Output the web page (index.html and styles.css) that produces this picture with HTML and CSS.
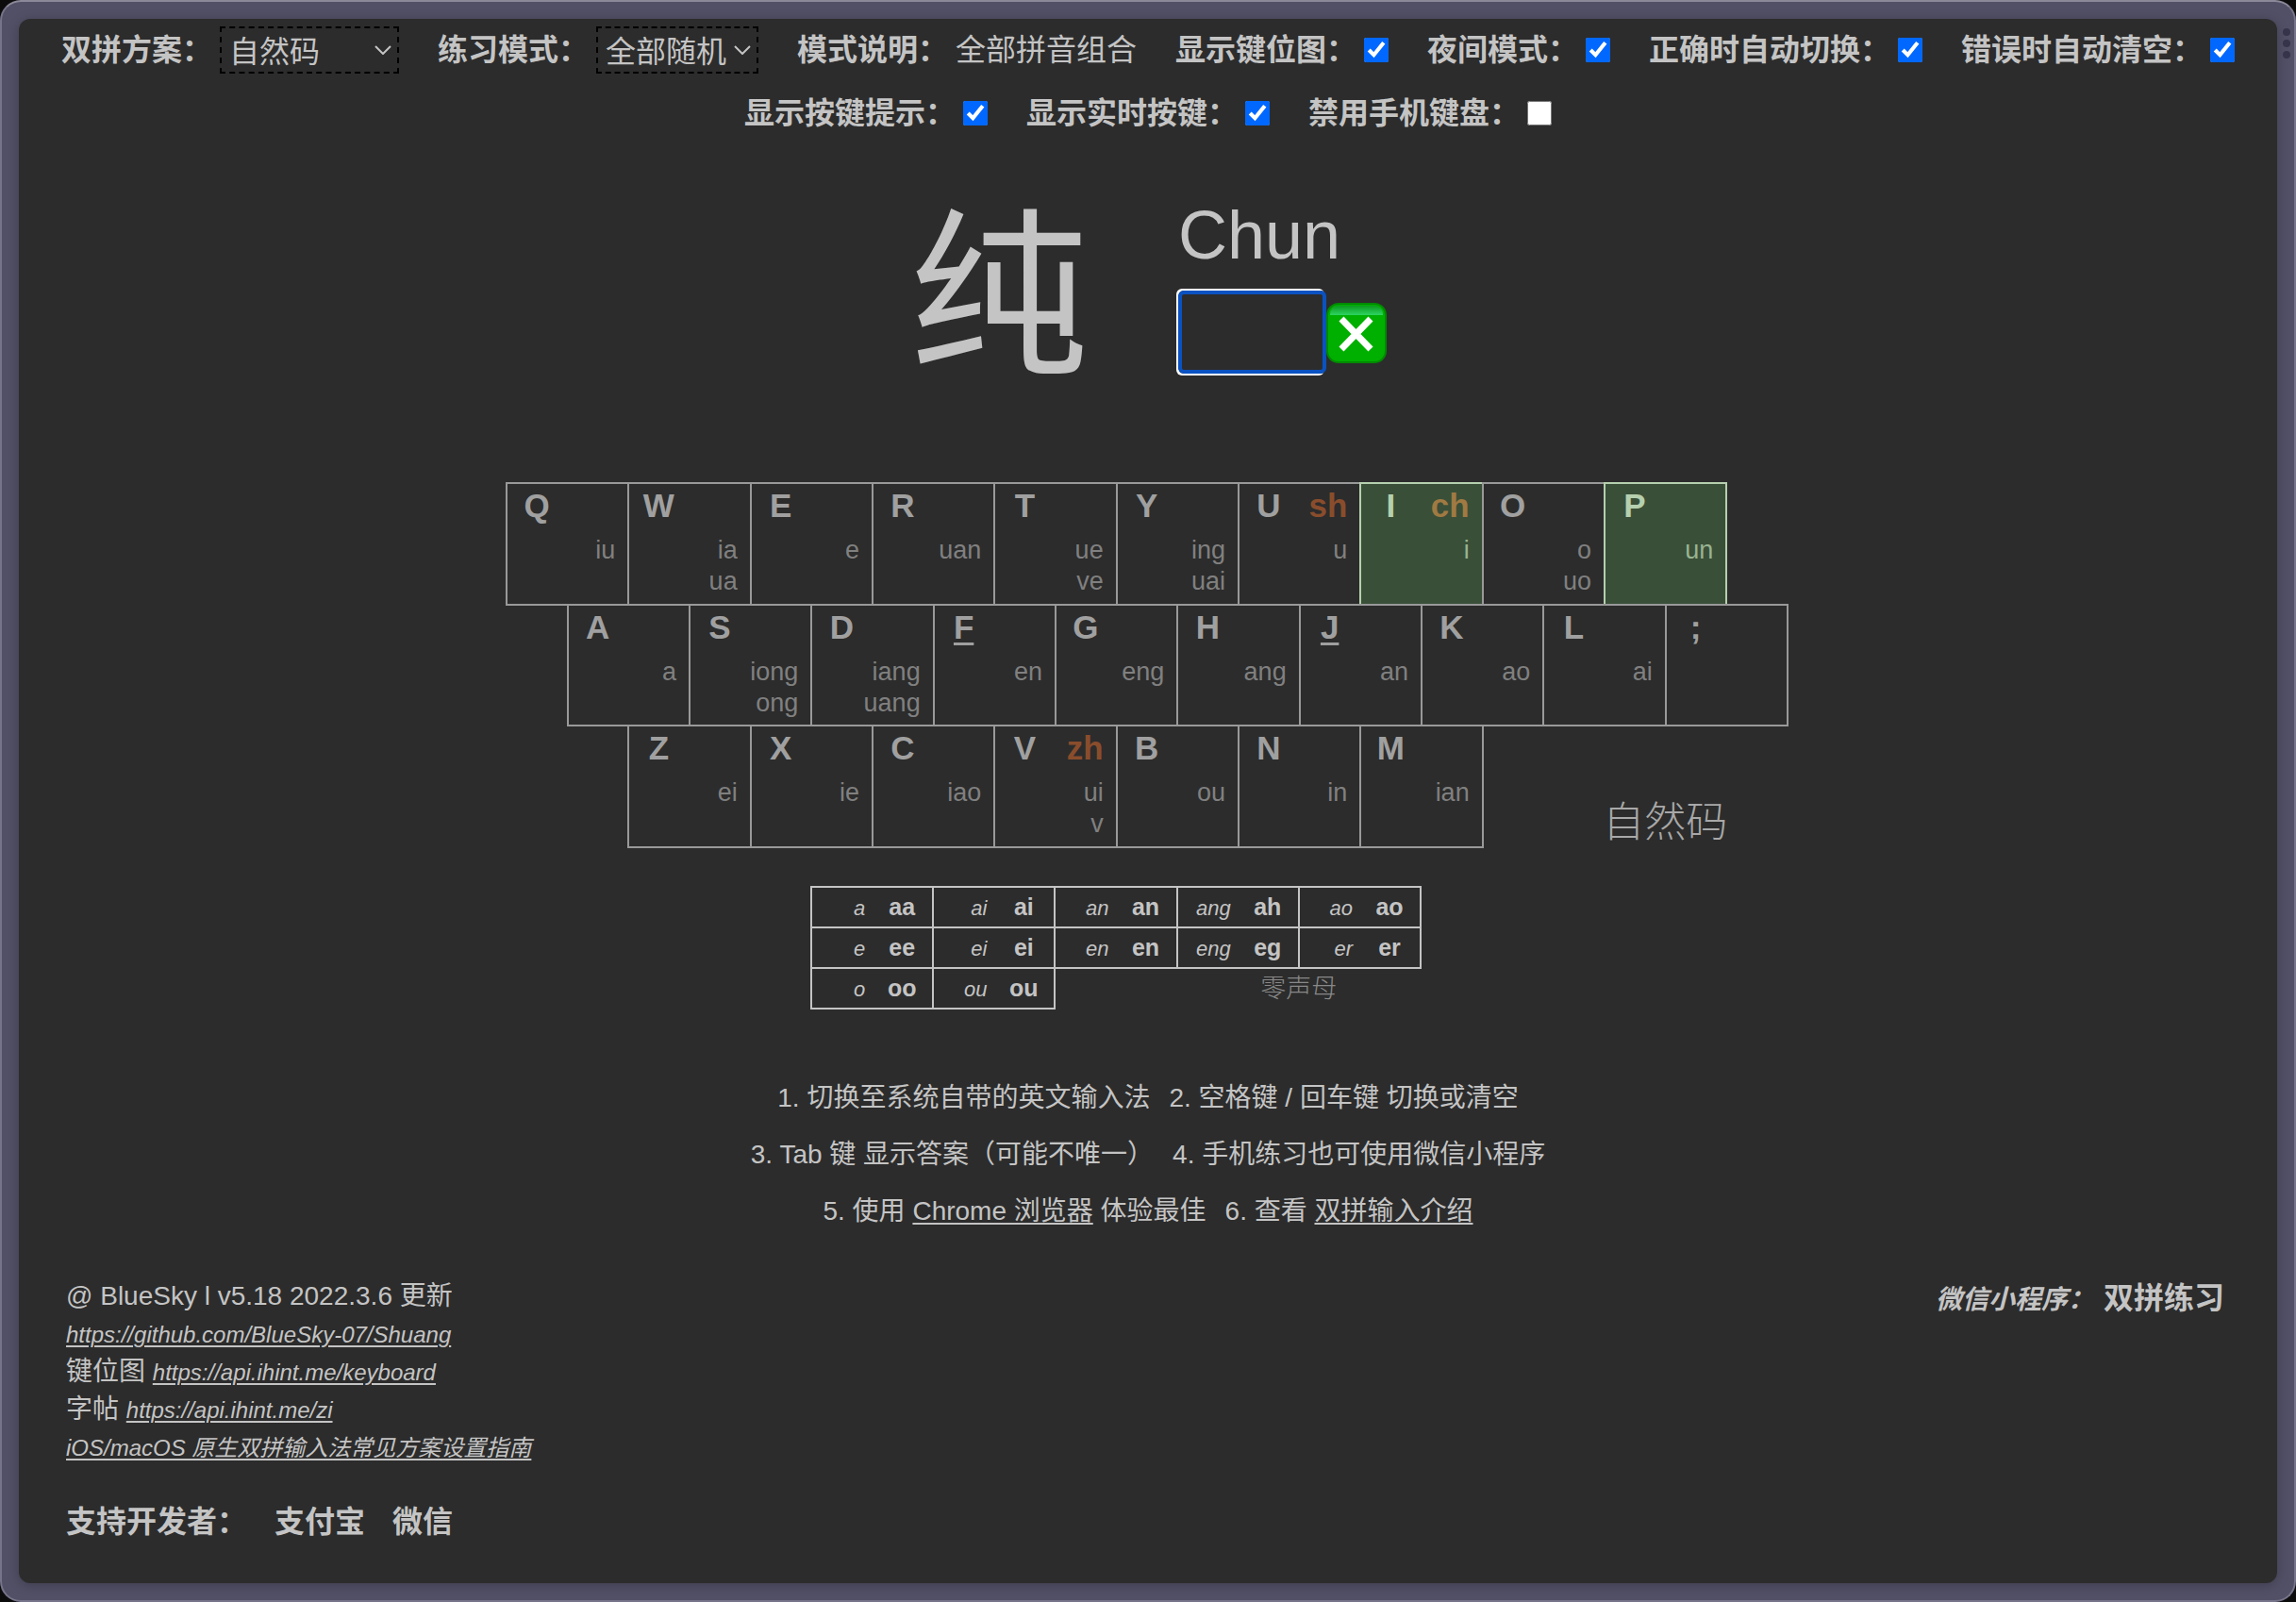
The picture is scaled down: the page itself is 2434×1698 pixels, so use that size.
FILE: index.html
```
<!DOCTYPE html>
<html lang="zh-CN">
<head>
    <meta charset="UTF-8">
    <title>双拼练习</title>
    <link rel="stylesheet" href="styles.css">
</head>
<body>
    <div class="frame">
        <div class="frame-dots"><i></i><i></i><i></i></div>
        <div class="page">
            <div class="settings">
                <div class="setting">
                    <label for="scheme">双拼方案：</label>
                    <div class="select-box scheme">
                        <select id="scheme"><option>自然码</option></select>
                        <svg width="18" height="10" viewBox="0 0 18 10"><path d="M1 1l8 8 8-8"/></svg>
                    </div>
                </div>
                <div class="setting">
                    <label for="mode">练习模式：</label>
                    <div class="select-box mode">
                        <select id="mode"><option>全部随机</option></select>
                        <svg width="18" height="10" viewBox="0 0 18 10"><path d="M1 1l8 8 8-8"/></svg>
                    </div>
                </div>
                <div class="setting"><b>模式说明：</b><span>全部拼音组合</span></div>
                <div class="setting"><label for="show-pic">显示键位图：</label><input type="checkbox" id="show-pic" checked></div>
                <div class="setting"><label for="dark">夜间模式：</label><input type="checkbox" id="dark" checked></div>
                <div class="setting"><label for="auto-next">正确时自动切换：</label><input type="checkbox" id="auto-next" checked></div>
                <div class="setting"><label for="auto-clear">错误时自动清空：</label><input type="checkbox" id="auto-clear" checked></div>
                <div class="setting"><label for="show-keys">显示按键提示：</label><input type="checkbox" id="show-keys" checked></div>
                <div class="setting"><label for="show-pressed">显示实时按键：</label><input type="checkbox" id="show-pressed" checked></div>
                <div class="setting"><label for="no-mobile">禁用手机键盘：</label><input type="checkbox" id="no-mobile"></div>
            </div>

            <div class="question">
                <div class="hanzi">纯</div>
                <div class="answer">
                    <label class="pinyin" for="answer">Chun</label>
                    <div class="answer-row">
                        <input type="text" id="answer" maxlength="2" autocomplete="off">
                        <button class="clear" aria-label="清空">
                            <svg width="64" height="64" viewBox="0 0 64 64">
                                <defs>
                                    <linearGradient id="shine" x1="0" y1="0" x2="0" y2="1">
                                        <stop offset="0" stop-color="#0a9a1e"/>
                                        <stop offset="1" stop-color="#2ed462"/>
                                    </linearGradient>
                                </defs>
                                <rect x="0" y="0" width="64" height="64" rx="13" fill="#008a00"/>
                                <rect x="2" y="2" width="60" height="60" rx="11" fill="#00b000"/>
                                <path d="M4 13Q4 3 14 3h36q10 0 10 10z" fill="url(#shine)"/>
                                <path d="M16 17l31 32M47 17L16 49" stroke="#fff" stroke-width="7"/>
                            </svg>
                        </button>
                    </div>
                </div>
            </div>

            <div class="chart">
                <div class="keyboard">
                    <div class="key"><b>Q</b><p>iu</p></div>
                    <div class="key"><b>W</b><p>ia<br>ua</p></div>
                    <div class="key"><b>E</b><p>e</p></div>
                    <div class="key"><b>R</b><p>uan</p></div>
                    <div class="key"><b>T</b><p>ue<br>ve</p></div>
                    <div class="key"><b>Y</b><p>ing<br>uai</p></div>
                    <div class="key"><b>U</b><em>sh</em><p>u</p></div>
                    <div class="key active"><b>I</b><em>ch</em><p>i</p></div>
                    <div class="key"><b>O</b><p>o<br>uo</p></div>
                    <div class="key active"><b>P</b><p>un</p></div>

                    <div class="key row-2"><b>A</b><p>a</p></div>
                    <div class="key"><b>S</b><p>iong<br>ong</p></div>
                    <div class="key"><b>D</b><p>iang<br>uang</p></div>
                    <div class="key"><b><u>F</u></b><p>en</p></div>
                    <div class="key"><b>G</b><p>eng</p></div>
                    <div class="key"><b>H</b><p>ang</p></div>
                    <div class="key"><b><u>J</u></b><p>an</p></div>
                    <div class="key"><b>K</b><p>ao</p></div>
                    <div class="key"><b>L</b><p>ai</p></div>
                    <div class="key"><b>;</b></div>

                    <div class="key row-3"><b>Z</b><p>ei</p></div>
                    <div class="key"><b>X</b><p>ie</p></div>
                    <div class="key"><b>C</b><p>iao</p></div>
                    <div class="key"><b>V</b><em>zh</em><p>ui<br>v</p></div>
                    <div class="key"><b>B</b><p>ou</p></div>
                    <div class="key"><b>N</b><p>in</p></div>
                    <div class="key"><b>M</b><p>ian</p></div>
                    <div class="scheme-name">自然码</div>
                </div>

                <table class="zero">
                    <tr>
                        <td><i>a</i><b>aa</b></td>
                        <td><i>ai</i><b>ai</b></td>
                        <td><i>an</i><b>an</b></td>
                        <td><i>ang</i><b>ah</b></td>
                        <td><i>ao</i><b>ao</b></td>
                    </tr>
                    <tr>
                        <td><i>e</i><b>ee</b></td>
                        <td><i>ei</i><b>ei</b></td>
                        <td><i>en</i><b>en</b></td>
                        <td><i>eng</i><b>eg</b></td>
                        <td><i>er</i><b>er</b></td>
                    </tr>
                    <tr>
                        <td><i>o</i><b>oo</b></td>
                        <td><i>ou</i><b>ou</b></td>
                        <td class="blank"></td>
                        <td class="blank" colspan="2">零声母</td>
                    </tr>
                </table>
            </div>

            <div class="tips">
                <div><span>1. 切换至系统自带的英文输入法</span><span>2. 空格键 / 回车键 切换或清空</span></div>
                <div><span>3. Tab 键 显示答案（可能不唯一）</span><span>4. 手机练习也可使用微信小程序</span></div>
                <div><span>5. 使用 <a href="#">Chrome 浏览器</a> 体验最佳</span><span>6. 查看 <a href="#">双拼输入介绍</a></span></div>
            </div>

            <div class="footer">
                <div class="about">
                    <div>@ BlueSky l v5.18 2022.3.6 更新</div>
                    <div><a href="#">https://github.com/BlueSky-07/Shuang</a></div>
                    <div>键位图 <a href="#">https://api.ihint.me/keyboard</a></div>
                    <div>字帖 <a href="#">https://api.ihint.me/zi</a></div>
                    <div><a href="#">iOS/macOS 原生双拼输入法常见方案设置指南</a></div>
                </div>
                <div class="wechat"><i>微信小程序：</i><b>双拼练习</b></div>
            </div>
            <div class="support"><b>支持开发者：</b><b>支付宝</b><b>微信</b></div>
        </div>
    </div>
</body>
</html>
```
FILE: styles.css
```
* {
    box-sizing: border-box;
}

body {
    margin: 0;
    background-color: #0c0c0c;
    color: #c4c4c4;
    font-family: "Liberation Sans", "Noto Sans CJK SC", sans-serif;
    font-size: 32px;
}

a {
    color: inherit;
    text-underline-offset: 3px;
    text-decoration-thickness: 2px;
}

.frame {
    position: relative;
    display: flex;
    min-height: 100vh;
    padding: 18px;
    border: 2px solid #76748a;
    border-top-color: #8b8999;
    border-radius: 22px;
    background-color: #525066;
}

.frame-dots {
    position: absolute;
    top: 28px;
    right: 4px;
    display: flex;
    flex-direction: column;
    gap: 4px;
}

.frame-dots i {
    width: 8px;
    height: 8px;
    border-radius: 50%;
    background-color: #35344a;
}

.page {
    flex: 1;
    padding: 8px 30px 30px;
    border-radius: 12px;
    background-color: #2c2c2c;
    box-shadow: 0 2px 12px rgba(0, 0, 0, 0.25);
}

/* settings */
.settings {
    display: flex;
    flex-wrap: wrap;
    justify-content: center;
    gap: 17px 41px;
}

.setting {
    display: flex;
    align-items: center;
    gap: 8px;
    height: 50px;
    line-height: 50px;
}

.setting label {
    font-weight: bold;
}

.setting input {
    width: 26px;
    height: 26px;
    margin: 0;
    accent-color: #0068ff;
}

.select-box {
    position: relative;
}

.scheme {
    width: 190px;
}

.mode {
    width: 172px;
}

.select-box select {
    display: block;
    width: 100%;
    height: 50px;
    padding: 0 0 0 8px;
    border: 2px dashed #000;
    border-radius: 0;
    background: none;
    color: inherit;
    font: inherit;
    appearance: none;
}

.select-box svg {
    position: absolute;
    top: 20px;
    right: 8px;
    fill: none;
    stroke: #c4c4c4;
    stroke-width: 2;
    pointer-events: none;
}

/* question */
.question {
    display: flex;
    justify-content: center;
    gap: 95px;
    height: 260px;
    margin-top: 54px;
}

.hanzi {
    padding-top: 16px;
    font-size: 190px;
    line-height: 200px;
}

.pinyin {
    display: block;
    font-size: 72px;
    line-height: 80px;
    margin-top: 10px;
}

.answer-row {
    display: flex;
    align-items: center;
    margin-top: 19px;
}

.answer-row input {
    width: 157px;
    height: 88px;
    padding: 0 16px;
    border: 4px solid #0a52c2;
    border-radius: 6px;
    outline: none;
    background: none;
    color: inherit;
    font: inherit;
    font-size: 64px;
    box-shadow: -2px -2px #fff, -2px 2px #fff;
}

.clear {
    padding: 2px 0 0;
    border: none;
    background: none;
}

.clear svg {
    display: block;
}

/* keyboard chart */
.chart {
    width: 1362px;
    margin: 52px auto 0;
    padding-right: 4px;
}

/* every key covers two columns, so rows can shift by half a key */
.keyboard {
    display: grid;
    grid-template-columns: repeat(21, 1fr);
    grid-template-rows: repeat(3, 1fr);
    height: 386px;
}

.key {
    display: grid;
    grid-column: span 2;
    grid-template-columns: 62px 1fr;
    grid-template-rows: 40px 1fr;
    margin: 0 -2px -2px 0;
    padding: 3px 13px 0 0;
    border: 2px solid #999;
    color: #a0a0a0;
    font-size: 35px;
    line-height: 40px;
}

.row-2 {
    grid-column: 2 / span 2;
}

.row-3 {
    grid-column: 3 / span 2;
}

.key b {
    text-align: center;
}

.key u {
    text-underline-offset: 4px;
    text-decoration-thickness: 3px;
}

.key em {
    color: #8a4d2c;
    font-style: normal;
    font-weight: bold;
    text-align: right;
}

.key p {
    grid-column: 1 / 3;
    grid-row: 2;
    margin: 11px 0 0;
    color: #808080;
    font-size: 27px;
    line-height: 33px;
    text-align: right;
}

.key.active {
    border-color: #b5d0ae;
    background-color: #3a4f38;
    color: #b5d0ae;
}

.key.active em {
    color: #a07a42;
}

.key.active p {
    color: #98b492;
}

.scheme-name {
    grid-column: 18 / span 4;
    align-self: end;
    padding-left: 64px;
    color: #a8a8a8;
    font-size: 44px;
    font-weight: 300;
    line-height: 50px;
}

.zero {
    width: 648px;
    margin: 42px 0 0 323px;
    border-collapse: collapse;
    table-layout: fixed;
}

.zero td {
    height: 43px;
    padding: 0;
    border: 2px solid #c4c4c4;
    font-size: 25px;
    line-height: 38px;
    text-align: right;
}

.zero i {
    font-size: 22px;
}

.zero b {
    display: inline-block;
    width: 64px;
    margin-left: 7px;
    text-align: center;
}

.zero .blank {
    border: none;
    color: #888;
    font-size: 27px;
    font-weight: 300;
    text-align: center;
}

/* tips */
.tips {
    margin-top: 64px;
    font-size: 28px;
    line-height: 60px;
}

.tips div {
    display: flex;
    justify-content: center;
    gap: 20px;
}

/* footer */
.footer {
    display: flex;
    justify-content: space-between;
    margin-top: 40px;
    padding: 0 26px 0 20px;
}

.about {
    font-size: 28px;
    line-height: 40px;
}

.about a {
    font-size: 24px;
    font-style: italic;
    line-height: 30px;
}

.wechat {
    margin-top: 2px;
    line-height: 40px;
}

.wechat i {
    font-size: 28px;
    font-weight: bold;
    margin-right: 10px;
}

.support {
    display: flex;
    gap: 29px;
    margin-top: 34px;
    padding-left: 20px;
    line-height: 50px;
}
```
